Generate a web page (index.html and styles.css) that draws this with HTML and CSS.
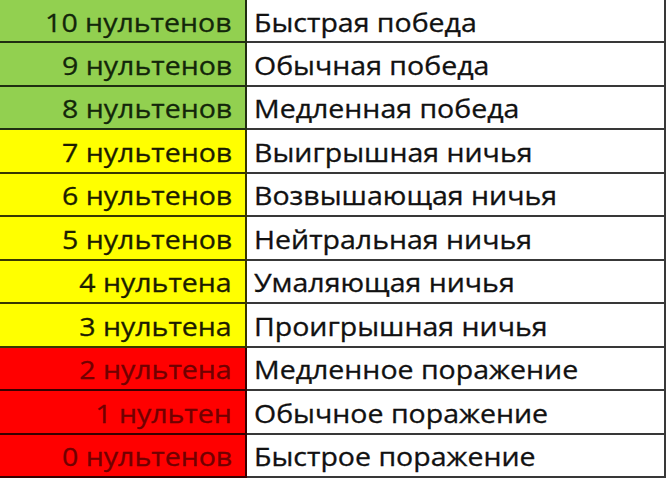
FILE: index.html
```html
<!DOCTYPE html>
<html lang="ru">
<head>
<meta charset="utf-8">
<title>Нультены</title>
<link rel="stylesheet" href="styles.css">
</head>
<body>
<div class="table">
  <div class="cell score green"><span class="txt">10 нультенов</span></div><div class="cell label"><span class="txt">Быстрая победа</span></div>
  <div class="cell score green"><span class="txt">9 нультенов</span></div><div class="cell label"><span class="txt">Обычная победа</span></div>
  <div class="cell score green"><span class="txt">8 нультенов</span></div><div class="cell label"><span class="txt">Медленная победа</span></div>
  <div class="cell score yellow"><span class="txt">7 нультенов</span></div><div class="cell label"><span class="txt">Выигрышная ничья</span></div>
  <div class="cell score yellow"><span class="txt">6 нультенов</span></div><div class="cell label"><span class="txt">Возвышающая ничья</span></div>
  <div class="cell score yellow"><span class="txt">5 нультенов</span></div><div class="cell label"><span class="txt">Нейтральная ничья</span></div>
  <div class="cell score yellow"><span class="txt">4 нультена</span></div><div class="cell label"><span class="txt">Умаляющая ничья</span></div>
  <div class="cell score yellow"><span class="txt">3 нультена</span></div><div class="cell label"><span class="txt">Проигрышная ничья</span></div>
  <div class="cell score red"><span class="txt">2 нультена</span></div><div class="cell label"><span class="txt">Медленное поражение</span></div>
  <div class="cell score red"><span class="txt">1 нультен</span></div><div class="cell label"><span class="txt">Обычное поражение</span></div>
  <div class="cell score red"><span class="txt">0 нультенов</span></div><div class="cell label"><span class="txt">Быстрое поражение</span></div>
</div>
</body>
</html>
```
FILE: styles.css
```css
html, body {
  margin: 0;
  padding: 0;
  background: #ffffff;
}
body {
  width: 666px;
  height: 479px;
  overflow: hidden;
  font-family: "Open Sans", "Noto Sans", sans-serif;
}
.table {
  display: grid;
  grid-template-columns: 247px 419px;
  grid-template-rows: 43px repeat(10, 43.5px);
}
.cell {
  display: flex;
  align-items: center;
  border-bottom: 2px solid rgba(0, 0, 0, 0.78);
  border-right: 2px solid rgba(0, 0, 0, 0.78);
  font-size: 25px;
  line-height: 1;
  padding-top: 3px;
  box-sizing: border-box;
  white-space: nowrap;
}
.txt {
  display: inline-block;
  transform: scaleX(1.14);
  -webkit-text-stroke: 0.3px currentColor;
}
.score {
  justify-content: flex-end;
  padding-right: 13px;
}
.score .txt {
  transform-origin: right center;
}
.label {
  padding-left: 7px;
  color: #111111;
}
.label .txt {
  transform-origin: left center;
}
.green {
  background: #92d050;
  color: #13260a;
}
.yellow {
  background: #ffff00;
  color: #1c1c00;
}
.red {
  background: #ff0000;
  color: #700000;
}
```
